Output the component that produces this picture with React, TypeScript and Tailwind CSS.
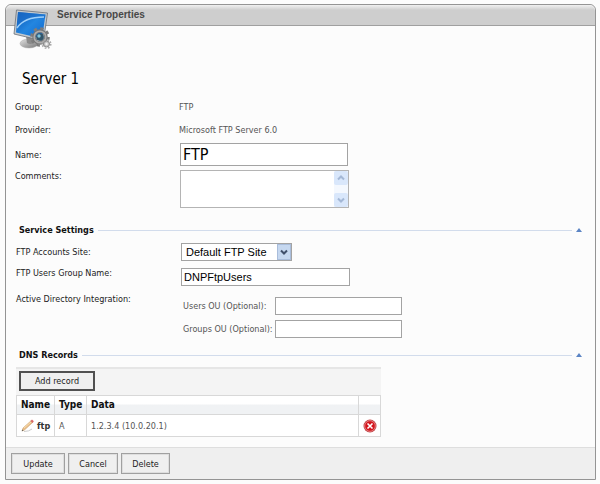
import type { ReactNode } from "react";

const field =
  "border border-[#a3a3a3] bg-white text-black outline-none";
const button =
  "h-[21px] border border-[#a0a0a0] bg-[#efefef] text-center text-[9px] leading-4 text-[#222] shadow-[inset_0_0_0_1px_#dedede]";

function ServerIcon() {
  return (
    <svg width="40" height="42" viewBox="0 0 40 42" aria-hidden="true">
      <defs>
        <linearGradient id="screen" x1="0" y1="0" x2="1" y2="1">
          <stop offset="0" stopColor="#0a55b4" />
          <stop offset=".5" stopColor="#2386e0" />
          <stop offset="1" stopColor="#1266cc" />
        </linearGradient>
        <linearGradient id="metal" x1="0" y1="0" x2="1" y2="1">
          <stop offset="0" stopColor="#e2e2e2" />
          <stop offset="1" stopColor="#777" />
        </linearGradient>
      </defs>
      <ellipse cx="16" cy="34.500" rx="9" ry="4.500" fill="url(#metal)" stroke="#aaa" strokeWidth=".5" />
      <path d="M13 27l8 2v5q-4 2-7 0z" fill="#8b8b8b" />
      <path d="M3.500 1L34.500 4 30.500 32 1 25z" fill="#c3c9ce" stroke="#697078" strokeWidth=".8" />
      <path d="M5 3L32.500 5.500 29 29.500 3 23.500z" fill="url(#screen)" />
      <path d="M5 3L32.500 5.500 32 9.500Q15 8 4 18z" fill="#1c6cc8" opacity=".6" />
      <path d="M4 19Q11 8 31 8" fill="none" stroke="#9dd0fa" strokeWidth="1.500" />
      <g transform="translate(27 28)">
        <circle r="8.500" fill="none" stroke="#7d7d7d" strokeWidth="2.600" strokeDasharray="3.300 3.375" />
        <circle r="6" fill="none" stroke="#777" strokeWidth="3.500" />
        <circle r="5.800" fill="none" stroke="#aeaeae" strokeWidth="1.600" />
        <circle r="3.800" fill="#34566a" />
        <circle cx="-1" cy="-1" r="1.700" fill="#7fc5dd" />
      </g>
      <g transform="translate(33.500 35)">
        <circle r="3" fill="#c4c4c4" stroke="#8b8b8b" />
        <circle r="4.300" fill="none" stroke="#aaa" strokeWidth="1.500" strokeDasharray="1.700 1.677" />
        <circle r="1.200" fill="#f2f2f2" />
      </g>
    </svg>
  );
}

function Chevron({ up = false, color }: { up?: boolean; color: string }) {
  return (
    <svg width="8" height="6" viewBox="0 0 8 6" aria-hidden="true">
      <path d={up ? "M1 4.500L4 1.500 7 4.500" : "M1 1.500L4 4.500 7 1.500"} fill="none" stroke={color} strokeWidth="2" />
    </svg>
  );
}

function SectionHeading({ children }: { children: ReactNode }) {
  return (
    <div className="flex h-4 items-center pr-[13px] pl-[13px]">
      <h2 className="text-[9px] leading-4 font-bold text-[#111]">{children}</h2>
      <div className="ml-1 h-px flex-1 bg-[#d2dcec]" />
      <button type="button" aria-label="Collapse section" className="ml-1 flex w-[6px] items-center">
        <svg width="6" height="4" viewBox="0 0 6 4" aria-hidden="true">
          <path d="M3 0L6 4H0z" fill="#5b84c4" />
        </svg>
      </button>
    </div>
  );
}

export default function App() {
  return (
    <main className="bg-[#fcfcfc] pt-1 pr-1 pb-1 pl-[5px] font-['DejaVu_Sans_Condensed','DejaVu_Sans',sans-serif] text-[9px] leading-4 text-[#222]">
      <form className="rounded-t-md border border-[#949494] bg-[#fcfcfc]" onSubmit={(e) => e.preventDefault()}>
        <header className="relative h-[21px] rounded-t-md border-b border-[#a0a0a0] bg-linear-to-b from-[#f0f0f0] to-[#cecece] to-25% pl-[51px]">
          <div className="absolute top-1 left-[7px]">
            <ServerIcon />
          </div>
          <h1 className="font-['Liberation_Sans',Arial,sans-serif] text-[10px] leading-5 font-bold text-[#484848]">
            Service Properties
          </h1>
        </header>

        <div className="px-[9px] pt-[41px]">
          <p className="pl-[7px] text-[15px] leading-6 text-black">Server 1</p>
          <dl className="mt-2 grid grid-cols-[164px_1fr] gap-y-[7px]">
            <dt>Group:</dt>
            <dd className="text-[#555]">FTP</dd>
            <dt>Provider:</dt>
            <dd className="text-[#555]">Microsoft FTP Server 6.0</dd>
          </dl>
          <div className="mt-[5px] grid grid-cols-[165px_1fr] gap-y-1">
            <label htmlFor="name" className="pt-1">Name:</label>
            <input
              id="name"
              defaultValue="FTP"
              className={`${field} h-[23px] w-[168px] px-[2px] font-['DejaVu_Sans_Condensed','DejaVu_Sans',sans-serif] text-[16px]`}
            />
            <label htmlFor="comments" className="-mt-[2px]">Comments:</label>
            <div className="flex h-[38px] w-[169px] border border-[#b4b4b4] bg-white">
              <textarea id="comments" className="min-w-0 flex-1 resize-none overflow-hidden outline-none" />
              <div className="flex w-[14px] flex-col justify-between bg-[#f4f8fe]" aria-hidden="true">
                <div className="flex h-[14px] items-center justify-center rounded-xs bg-[#d9e7fb]"><Chevron up color="#a4b8d6" /></div>
                <div className="flex h-[14px] items-center justify-center rounded-xs bg-[#d9e7fb]"><Chevron color="#a4b8d6" /></div>
              </div>
            </div>
          </div>
        </div>

        <section className="mt-[14px]">
          <SectionHeading>Service Settings</SectionHeading>
          <div className="mt-[5px] grid grid-cols-[165px_1fr] pl-[10px]">
            <label htmlFor="site" className="pt-px">FTP Accounts Site:</label>
            <div className="relative h-[18px] w-[111px]">
              <select
                id="site"
                className={`${field} block h-full w-full appearance-none pl-1 font-['Liberation_Sans',Arial,sans-serif] text-[11px]`}
              >
                <option>Default FTP Site</option>
              </select>
              <span className="pointer-events-none absolute top-px right-px flex h-4 w-[14px] items-center justify-center border border-[#a9bddb] bg-[#c6d8f0]">
                <Chevron color="#40506b" />
              </span>
            </div>
            <label htmlFor="group" className="pt-1">FTP Users Group Name:</label>
            <input
              id="group"
              defaultValue="DNPFtpUsers"
              className={`${field} mt-[7px] h-[18px] w-[169px] px-[2px] font-['Liberation_Sans',Arial,sans-serif] text-[11px]`}
            />
            <div className="pt-[5px]">Active Directory Integration:</div>
            <div className="mt-[11px] grid grid-cols-[92px_127px] gap-y-[5px] pl-[2px] text-[#555]">
              <label htmlFor="users-ou" className="pt-px whitespace-nowrap">Users OU (Optional):</label>
              <input id="users-ou" className={`${field} h-[18px] w-full px-[2px]`} />
              <label htmlFor="groups-ou" className="pt-px whitespace-nowrap">Groups OU (Optional):</label>
              <input id="groups-ou" className={`${field} h-[18px] w-full px-[2px]`} />
            </div>
          </div>
        </section>

        <section className="mt-[9px]">
          <SectionHeading>DNS Records</SectionHeading>
          <div className="mt-1 ml-[10px] w-[365px]">
            <div className="h-7 border-t-2 border-[#e6e6e6] bg-[#f4f4f4] pt-[2px] pl-[3px]">
              <button type="button" className="block h-5 w-[76px] border-2 border-[#505050] bg-[#efefef] text-[9px] leading-4">
                Add record
              </button>
            </div>
            <table className="w-full table-fixed border-collapse bg-white text-left">
              <colgroup>
                <col className="w-[38px]" />
                <col className="w-8" />
                <col />
                <col className="w-[22px]" />
              </colgroup>
              <thead>
                <tr className="h-[19px] bg-linear-to-b from-white from-40% to-[#f0f2f4] to-50% text-[10px] text-[#111]">
                  <th className="border border-[#d8d8d8] pl-1">Name</th>
                  <th className="border border-[#d8d8d8] pl-1">Type</th>
                  <th className="border border-[#d8d8d8] pl-1">Data</th>
                  <th className="border border-[#d8d8d8]" aria-label="Actions" />
                </tr>
              </thead>
              <tbody>
                <tr className="h-[22px]">
                  <td className="border border-[#d8d8d8] pl-1">
                    <a href="#ftp" className="flex items-center gap-[3px] text-[9px] font-bold text-[#333]">
                      <svg width="13" height="13" viewBox="0 0 13 13" aria-hidden="true">
                        <path d="M3 12.500Q8 12.500 11 10" fill="none" stroke="#ccc" />
                        <path d="M1 12L2 9 10 1.800 11.600 3.500 3.500 11z" fill="#e8bd88" stroke="#c79a64" strokeWidth=".5" />
                        <path d="M3 9L10.500 2.500" stroke="#f9dfb0" />
                        <path d="M9.500 2L11 .5 12.800 2.300 11.500 4z" fill="#d96666" />
                        <path d="M.7 12.300L1.500 10.500 2.500 11.600z" fill="#555" />
                      </svg>
                      ftp
                    </a>
                  </td>
                  <td className="border border-[#d8d8d8] pl-1 text-[#555]">A</td>
                  <td className="border border-[#d8d8d8] pl-1 text-[#555]">1.2.3.4 (10.0.20.1)</td>
                  <td className="border border-[#d8d8d8]">
                    <button type="button" aria-label="Delete record" className="mx-auto block size-[14px]">
                      <svg width="14" height="14" viewBox="0 0 14 14" aria-hidden="true">
                        <circle cx="7" cy="7" r="6.500" fill="#c04044" />
                        <circle cx="7" cy="7" r="5.300" fill="#d4141c" stroke="#efa0a0" strokeWidth=".7" />
                        <path d="M4.500 4.500l5 5m0-5l-5 5" stroke="#fff" strokeWidth="1.600" />
                      </svg>
                    </button>
                  </td>
                </tr>
              </tbody>
            </table>
          </div>
        </section>

        <footer className="mt-[10px] flex h-8 gap-[3px] border-t border-[#dedede] bg-[#efefef] pt-[5px] pl-[5px]">
          <button type="submit" className={`${button} w-[54px]`}>Update</button>
          <button type="button" className={`${button} w-[50px]`}>Cancel</button>
          <button type="button" className={`${button} w-[49px]`}>Delete</button>
        </footer>
      </form>
    </main>
  );
}
